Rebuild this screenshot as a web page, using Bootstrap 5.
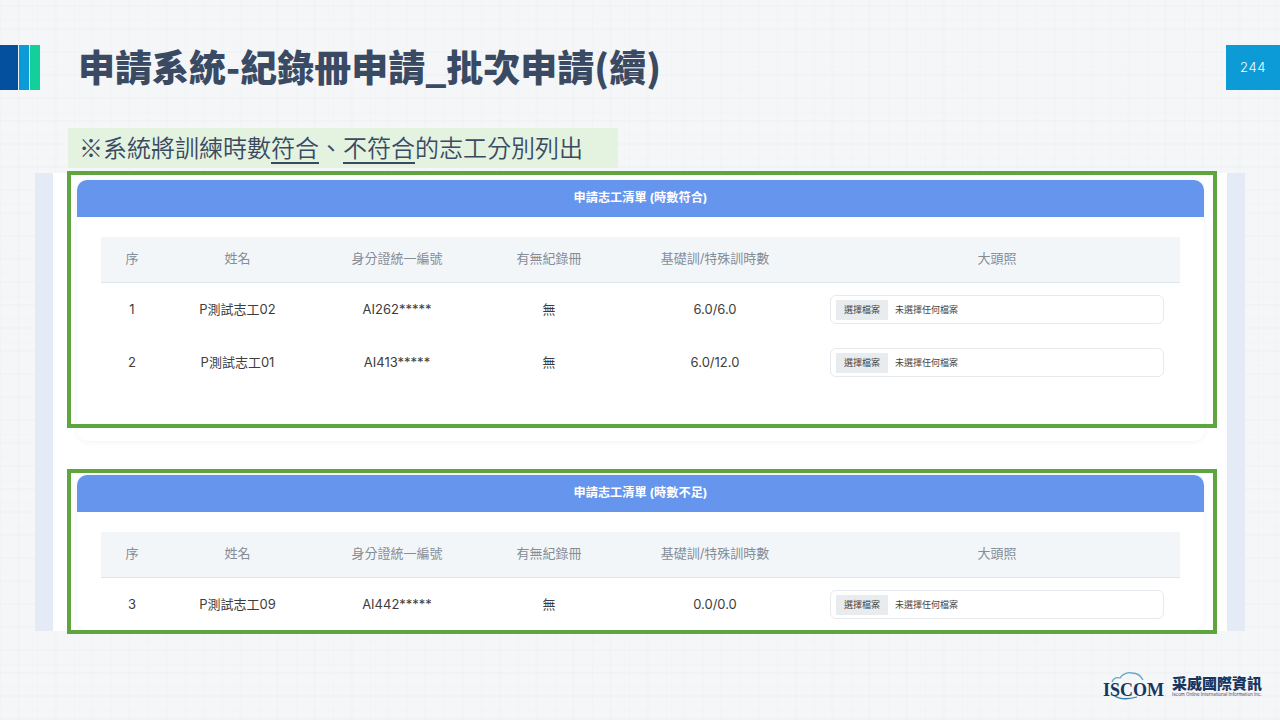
<!DOCTYPE html>
<html lang="zh-Hant">
<head>
  <meta charset="UTF-8">
  <title>申請系統-紀錄冊申請_批次申請(續)</title>
  <link href="https://cdn.jsdelivr.net/npm/bootstrap@5.3.2/dist/css/bootstrap.min.css" rel="stylesheet">
  <style>
  body {
    margin: 0;
    font-family: Inter, "Noto Sans CJK TC", sans-serif;
    background-color: #f5f6f8;
  }

  .deck {
    position: relative;
    width: 1280px;
    height: 720px;
    overflow: hidden;
    background-color: #f5f6f8;
    background-image:
      repeating-linear-gradient(0deg, rgba(215, 220, 228, .12) 0 2px, transparent 2px 9px, rgba(215, 220, 228, .08) 9px 10px, transparent 10px 23px),
      repeating-linear-gradient(90deg, rgba(215, 220, 228, .1) 0 1px, transparent 1px 17px, rgba(215, 220, 228, .07) 17px 20px, transparent 20px 37px);
    padding-top: 45px;
  }

  /* encabezado */
  .head-row { height: 45px; }
  .stripes { width: 40px; gap: 1px; }
  .stripe-a { width: 18px; background: #04509f; }
  .stripe-b { width: 10px; background: #0d9bd8; }
  .stripe-c { width: 10px; background: #12cf9b; }
  .slide-title {
    margin: 0 0 0 38px;
    font-family: "Noto Sans CJK TC", sans-serif;
    font-size: 37px;
    font-weight: 900;
    line-height: 45px;
    color: #3a4a63;
    margin-top: -1px;
  }
  .page-no {
    width: 54px;
    background: #0d9bd8;
    color: #fff;
    font-size: 13px;
    font-weight: 300;
    letter-spacing: .6px;
  }

  .note-line {
    width: 550px;
    height: 40px;
    margin: 38px 0 0 68px;
    padding-left: 11px;
    background: #e4f2e0;
    font-family: "Noto Sans CJK TC", sans-serif;
    font-size: 24px;
    font-weight: 350;
    line-height: 38px;
    color: #3a4a63;
  }
  .note-line u { text-underline-offset: 5px; text-decoration-thickness: 2px; }

  /* captura */
  .shot {
    width: 1210px;
    height: 458px;
    margin: 5px 0 0 35px;
    padding: 0 18px;
    background: #e5ebf6;
    overflow: hidden;
  }
  .shot-inner {
    height: 100%;
    background: #fff;
    padding: 7px 23px 0 24px;
    overflow: hidden;
  }

  .vol-card {
    border: 0;
    border-radius: 10px;
    box-shadow: 0 1px 5px rgba(60, 80, 120, .07);
    margin-bottom: 34px;
  }
  .vol-card .card-header {
    height: 37px;
    padding: 0;
    border: 0;
    border-radius: 10px 10px 0 0;
    background: #6595ec;
    color: #fff;
    font-size: 12.2px;
    font-weight: 700;
    line-height: 35px;
    text-align: center;
  }
  .vol-card .card-body { padding: 20px 24px 0; }
  .vol-card.first .card-body { height: 224px; }

  .vol-table { table-layout: fixed; margin: 0; font-size: 13px; }
  .vol-table th, .vol-table td {
    padding: 0;
    text-align: center;
    vertical-align: middle;
    border: 0;
  }
  .vol-table th {
    height: 45px;
    padding-bottom: 2px;
    background: #f3f6f9;
    border-bottom: 1px solid #dfe5ec;
    color: #858d97;
    font-weight: 400;
  }
  .vol-table td { height: 53px; padding-top: 2px; color: #3d3d3d; }
  .c-no { width: 62px; }
  .c-name { width: 149px; }
  .c-id { width: 170px; }
  .c-book { width: 134px; }
  .c-hours { width: 198px; }

  .file-box {
    display: flex;
    align-items: center;
    width: 334px;
    height: 29px;
    margin-left: 16px;
    padding: 0 5px;
    border: 1px solid #e6e9ee;
    border-radius: 6px;
    font-size: 9px;
    color: #444;
    text-align: left;
  }
  .file-btn {
    width: 52px;
    height: 20px;
    margin-right: 7px;
    background: #e9ecef;
    line-height: 20px;
    text-align: center;
  }

  /* marcos verdes sobre la captura */
  .green-frame {
    position: absolute;
    left: 67px;
    width: 1150px;
    border: 4px solid #5ea53f;
  }
  .frame-one { top: 171px; height: 257px; }
  .frame-two { top: 469px; height: 165px; }

  /* logo */
  .brand {
    margin: 39px 18px 0 0;
    height: 27px;
    gap: 7px;
    color: #17365f;
  }
  .brand-mark { position: relative; width: 62px; height: 27px; }
  .brand-mark svg { position: absolute; left: 0; top: -3px; }
  .brand-word {
    position: absolute;
    left: 0;
    bottom: -2px;
    font-family: "Liberation Serif", serif;
    font-weight: 700;
    font-size: 18px;
    line-height: 18px;
  }
  .brand-zh {
    margin-top: 5px;
    font-family: "Noto Sans CJK TC", sans-serif;
    font-weight: 900;
    font-size: 15px;
    line-height: 18px;
  }
  .brand-en { font-size: 4.5px; line-height: 6px; color: #445; white-space: nowrap; }
  </style>
</head>
<body>

<div class="deck">

  <div class="head-row d-flex">
    <div class="stripes d-flex">
      <div class="stripe-a"></div>
      <div class="stripe-b"></div>
      <div class="stripe-c"></div>
    </div>
    <h1 class="slide-title flex-grow-1">申請系統-紀錄冊申請_批次申請(續)</h1>
    <div class="page-no d-flex align-items-center justify-content-center">244</div>
  </div>

  <div class="note-line">※系統將訓練時數<u>符合</u>、<u>不符合</u>的志工分別列出</div>

  <div class="shot">
    <div class="shot-inner">

      <div class="card vol-card first">
        <div class="card-header">申請志工清單 (時數符合)</div>
        <div class="card-body">
          <table class="table vol-table">
            <thead>
              <tr>
                <th class="c-no">序</th>
                <th class="c-name">姓名</th>
                <th class="c-id">身分證統一編號</th>
                <th class="c-book">有無紀錄冊</th>
                <th class="c-hours">基礎訓/特殊訓時數</th>
                <th>大頭照</th>
              </tr>
            </thead>
            <tbody>
              <tr>
                <td>1</td>
                <td>P測試志工02</td>
                <td>AI262*****</td>
                <td>無</td>
                <td>6.0/6.0</td>
                <td><div class="file-box"><span class="file-btn">選擇檔案</span>未選擇任何檔案</div></td>
              </tr>
              <tr>
                <td>2</td>
                <td>P測試志工01</td>
                <td>AI413*****</td>
                <td>無</td>
                <td>6.0/12.0</td>
                <td><div class="file-box"><span class="file-btn">選擇檔案</span>未選擇任何檔案</div></td>
              </tr>
            </tbody>
          </table>
        </div>
      </div>

      <div class="card vol-card">
        <div class="card-header">申請志工清單 (時數不足)</div>
        <div class="card-body">
          <table class="table vol-table">
            <thead>
              <tr>
                <th class="c-no">序</th>
                <th class="c-name">姓名</th>
                <th class="c-id">身分證統一編號</th>
                <th class="c-book">有無紀錄冊</th>
                <th class="c-hours">基礎訓/特殊訓時數</th>
                <th>大頭照</th>
              </tr>
            </thead>
            <tbody>
              <tr>
                <td>3</td>
                <td>P測試志工09</td>
                <td>AI442*****</td>
                <td>無</td>
                <td>0.0/0.0</td>
                <td><div class="file-box"><span class="file-btn">選擇檔案</span>未選擇任何檔案</div></td>
              </tr>
            </tbody>
          </table>
        </div>
      </div>

    </div>
  </div>

  <div class="green-frame frame-one"></div>
  <div class="green-frame frame-two"></div>

  <div class="brand d-flex justify-content-end align-items-center">
    <div class="brand-mark">
      <svg width="62" height="36" viewBox="0 0 62 36" fill="none">
        <path d="M9 15C10 11 14 10 17 11C19 7 25 5 29 6C34 6 38 9 40 13" stroke="#5fa8c8" stroke-width="1.3"/>
        <path d="M10 28C17 33 27 32 34 30" stroke="#2f7fa8" stroke-width="1.3"/>
      </svg>
      <span class="brand-word">ISCOM</span>
    </div>
    <div>
      <div class="brand-zh">采威國際資訊</div>
      <div class="brand-en">Iscom Online International Information Inc.</div>
    </div>
  </div>

</div>

<script src="https://cdn.jsdelivr.net/npm/bootstrap@5.3.2/dist/js/bootstrap.bundle.min.js"></script>
</body>
</html>
